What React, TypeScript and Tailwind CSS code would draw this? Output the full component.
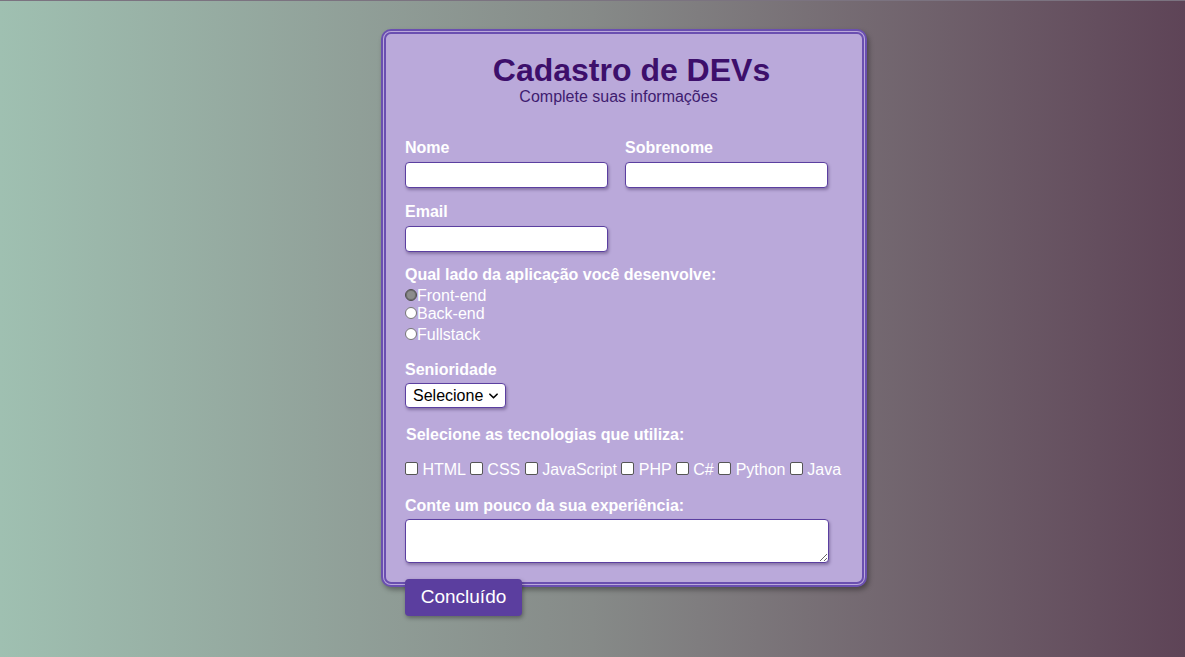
import React, { useState } from "react";

const techs = ["HTML", "CSS", "JavaScript", "PHP", "C#", "Python", "Java"];
const sides = ["Front-end", "Back-end", "Fullstack"];

const inputCls =
  "block h-[26px] w-[203px] rounded-[4px] border border-[#5b3fa0] bg-white px-2 text-[16px] text-black shadow-[1px_2px_3px_rgba(40,20,70,0.35)] outline-none";

const labelCls = "block text-[16px] font-bold leading-[18px] text-white";

const App: React.FC = () => {
  const [side, setSide] = useState("Front-end");
  const [checked, setChecked] = useState<string[]>([]);

  const toggleTech = (t: string) =>
    setChecked((prev) =>
      prev.includes(t) ? prev.filter((p) => p !== t) : [...prev, t]
    );

  return (
    <div className="min-h-[657px] w-full bg-gradient-to-r from-[#9fc0b1] via-[#868a88] to-[#5e4457] font-['Liberation_Sans',Arial,sans-serif]">
      <div className="h-px w-full bg-[#7b7380]" />
      <div className="pl-[381px] pt-[28px]">
        {/* Card */}
        <form
          className="w-[486px] rounded-[10px] border-[5px] border-double border-[#6a4fb0] bg-[#baa9da] pb-[19px] pl-[19px] shadow-[2px_3px_5px_rgba(0,0,0,0.35)]"
          onSubmit={(e) => e.preventDefault()}
        >
          {/* Header */}
          <h1 className="mt-[18px] pl-[14px] pr-[18px] text-center text-[32px] font-bold leading-[37px] text-[#3d0f6b]">
            Cadastro de DEVs
          </h1>
          <p className="-mt-px pr-[30px] text-center text-[16px] leading-[18px] text-[#3f1c70]">
            Complete suas informações
          </p>

          {/* Nome / Sobrenome */}
          <div className="mt-[33px] flex gap-[17px]">
            <div>
              <label className={labelCls}>Nome</label>
              <input className={`mt-[5px] ${inputCls}`} />
            </div>
            <div>
              <label className={labelCls}>Sobrenome</label>
              <input className={`mt-[5px] ${inputCls}`} />
            </div>
          </div>

          {/* Email */}
          <div className="mt-[15px]">
            <label className={labelCls}>Email</label>
            <input type="email" className={`mt-[5px] ${inputCls}`} />
          </div>

          {/* Lado */}
          <div className="mt-[14px]">
            <span className={labelCls}>
              Qual lado da aplicação você desenvolve:
            </span>
            <div className="mt-[3px]">
              {sides.map((s, i) => (
                <label
                  key={s}
                  className={`block text-[16px] leading-[18px] text-white ${
                    i === 2 ? "mt-[3px]" : ""
                  }`}
                >
                  <input
                    type="radio"
                    name="side"
                    checked={side === s}
                    onChange={() => setSide(s)}
                    className="inline-block h-[12px] w-[12px] appearance-none rounded-full border border-[#767676] bg-white align-baseline checked:border-[#4d4d4d] checked:bg-[#8c8c8c] checked:shadow-[inset_0_0_0_1px_#6e6e6e]"
                  />
                  {s}
                </label>
              ))}
            </div>
          </div>

          {/* Senioridade */}
          <div className="mt-[17px]">
            <label className={labelCls}>Senioridade</label>
            <div className="relative mt-[4px] w-[101px]">
              <select className="block h-[25px] w-[101px] appearance-none rounded-[4px] border border-[#5b3fa0] bg-white pl-[7px] text-[16px] leading-[23px] text-black shadow-[1px_2px_3px_rgba(40,20,70,0.35)] outline-none">
                <option>Selecione</option>
                <option>Júnior</option>
                <option>Pleno</option>
                <option>Sênior</option>
              </select>
              <svg
                viewBox="0 0 10 6"
                className="pointer-events-none absolute right-[8px] top-[10px] h-[6px] w-[9px]"
              >
                <path
                  d="M1 1l4 4 4-4"
                  fill="none"
                  stroke="#000"
                  strokeWidth="1.8"
                  strokeLinecap="round"
                  strokeLinejoin="round"
                />
              </svg>
            </div>
          </div>

          {/* Tecnologias */}
          <div className="mt-[18px]">
            <span className={`${labelCls} pl-px`}>
              Selecione as tecnologias que utiliza:
            </span>
            <div className="mt-[17px] text-[16px] leading-[18px] whitespace-nowrap text-white">
              {techs.map((t, i) => (
                <React.Fragment key={t}>
                  {i > 0 && " "}
                  <input
                    type="checkbox"
                    checked={checked.includes(t)}
                    onChange={() => toggleTech(t)}
                    className="inline-block h-[13px] w-[13px] appearance-none rounded-[2px] border border-[#555] bg-white align-baseline checked:bg-[#5b3fa0]"
                  />{" "}
                  {t}
                </React.Fragment>
              ))}
            </div>
          </div>

          {/* Experiência */}
          <div className="mt-[18px]">
            <label className={labelCls}>Conte um pouco da sua experiência:</label>
            <textarea className="mt-[4px] block h-[44px] w-[424px] rounded-[4px] border border-[#5b3fa0] bg-white px-2 text-[16px] text-black shadow-[1px_2px_3px_rgba(40,20,70,0.35)] outline-none" />
          </div>
        </form>

        <button
          type="submit"
          className="relative -mt-[8px] ml-[24px] block h-[37px] w-[117px] rounded-[4px] bg-[#5b3e9f] text-[19px] text-white shadow-[1px_2px_4px_rgba(0,0,0,0.35)]"
        >
          Concluído
        </button>
      </div>
    </div>
  );
};

export default App;
